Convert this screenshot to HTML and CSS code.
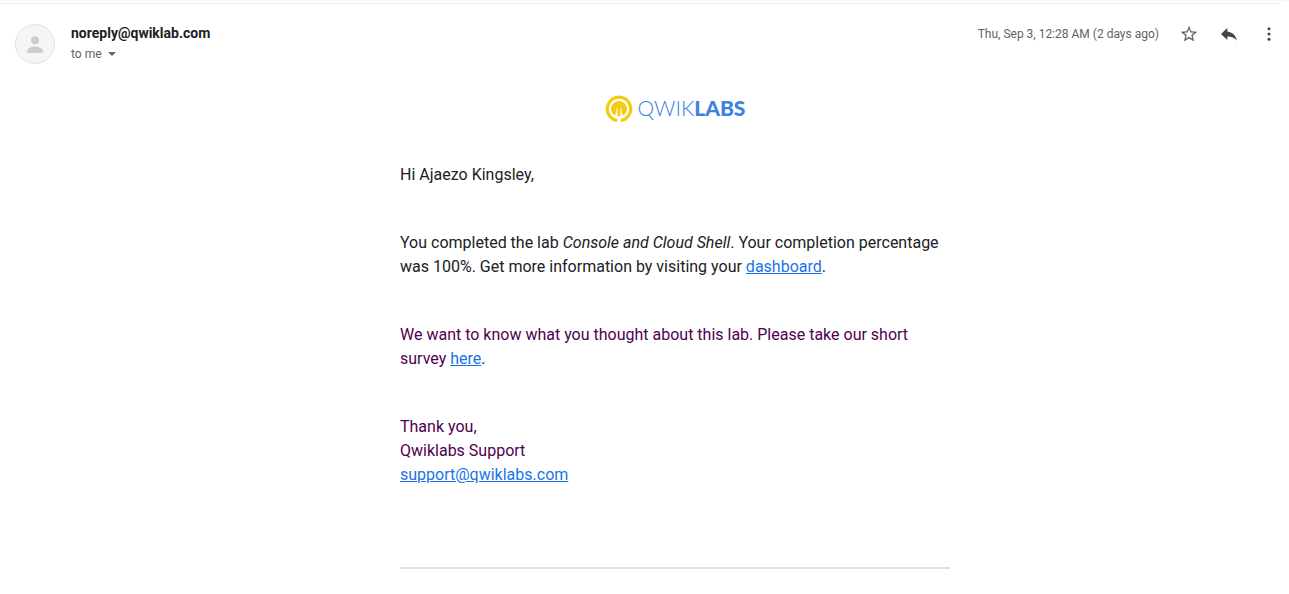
FILE: index.html
```html
<!DOCTYPE html>
<html lang="en">
<head>
<meta charset="utf-8">
<meta name="viewport" content="width=device-width, initial-scale=1">
<title>Qwiklabs message</title>
<link rel="stylesheet" href="styles.css">
</head>
<body>
<div class="top-edge"></div>
<div class="divider-strip"></div>
<article class="message">
  <header class="message-header">
    <svg class="avatar" viewBox="0 0 40 40" role="img" aria-label="Sender avatar">
      <circle cx="20" cy="20" r="19.5" fill="#f5f5f5" stroke="#e0e0e0"/>
      <circle cx="20" cy="16.300" r="4" fill="#ccc"/>
      <path d="M12.200 29v-2.300c0-2.700 4.500-4.300 7.800-4.300s7.800 1.600 7.800 4.300V29z" fill="#ccc"/>
    </svg>
    <div class="sender">
      <h3 class="sender-name">noreply@qwiklab.com</h3>
      <button class="recipient" type="button">to me
        <svg class="caret" viewBox="0 0 8 4" aria-hidden="true"><path d="M0 0h8L4 4z"/></svg>
      </button>
    </div>
    <time class="date">Thu, Sep 3, 12:28 AM (2 days ago)</time>
    <div class="actions">
      <button class="icon-button" type="button" aria-label="Star">
        <svg viewBox="0 0 20 20" fill="#666"><path d="M18.300 7.700l-6-.5L10 1.700 7.700 7.200l-6 .5 4.550 3.950L4.900 17.500l5.100-3.100 5.100 3.100-1.350-5.850zM10 12.800l-3.100 1.900.8-3.600-2.750-2.400 3.650-.3L10 5.050l1.400 3.350 3.650.3-2.750 2.400.8 3.600z"/></svg>
      </button>
      <button class="icon-button" type="button" aria-label="Reply">
        <svg viewBox="0 0 20 20" fill="#444"><path d="M8.300 7.400V4L2 10l6.300 6v-3.500c4.200 0 7.300 1.300 9.700 4.200-1-4.500-3.700-8.500-9.700-9.300z"/></svg>
      </button>
      <button class="icon-button" type="button" aria-label="More">
        <svg viewBox="0 0 20 20" fill="#444"><circle cx="10" cy="4.700" r="1.500"/><circle cx="10" cy="10" r="1.500"/><circle cx="10" cy="15.300" r="1.500"/></svg>
      </button>
    </div>
  </header>
  <div class="message-body">
    <div class="content">
      <div class="logo">
        <svg class="logo-mark" viewBox="0 0 28 28" aria-hidden="true">
          <path d="M12.300 25.500A11.700 11.700 0 1 1 15.700 25.500" fill="none" stroke="#f4cb0d" stroke-width="3.200"/>
          <path d="M9.500 20.600A8 8 0 1 1 18.500 20.600L16.600 17.700V13.500H15.500V21H12.500V13.500H11.400V17.700z" fill="#f4cb0d"/>
        </svg>
        <span class="logo-text">QWIK<b>LABS</b></span>
      </div>
      <p>Hi Ajaezo Kingsley,</p>
      <p>You completed the lab <em>Console and Cloud Shell</em>. Your completion percentage was 100%. Get more information by visiting your <a href="#">dashboard</a>.</p>
      <p class="quoted">We want to know what you thought about this lab. Please take our short survey <a href="#">here</a>.</p>
      <p class="quoted">Thank you,<br>Qwiklabs Support<br><a href="#">support@qwiklabs.com</a></p>
      <hr>
    </div>
  </div>
</article>
</body>
</html>
```
FILE: styles.css
```css
* {
  box-sizing: border-box;
}

body {
  margin: 0;
  background: #fff;
  color: #202124;
  font-family: Roboto, "Liberation Sans", sans-serif;
}

.top-edge {
  height: 1px;
  background: #f7f7f7;
}

.divider-strip {
  height: 3px;
  margin-right: 10px;
  border-bottom: 1px solid #ebebeb;
}

.message {
  padding: 20px 10px 0 15px;
}

.message-header {
  display: flex;
  align-items: flex-start;
}

.avatar {
  width: 40px;
  height: 40px;
  margin-right: 16px;
}

.sender {
  flex: 1;
}

.sender-name {
  margin: 0;
  font-size: 14px;
  line-height: 18px;
  font-weight: 700;
}

button {
  padding: 0;
  border: 0;
  background: none;
  font: inherit;
}

.recipient {
  display: flex;
  align-items: center;
  gap: 6px;
  color: #5f6368;
  font-size: 12px;
  line-height: 24px;
}

.caret {
  width: 8px;
  height: 4px;
  fill: #666;
}

.date {
  margin-right: 20px;
  color: #5f6368;
  font-size: 12px;
  line-height: 20px;
}

.actions {
  display: flex;
  gap: 20px;
}

.icon-button,
.icon-button svg {
  display: block;
  width: 20px;
  height: 20px;
}

.message-body {
  padding: 30px 0 24px 56px;
}

.content {
  max-width: 550px;
  margin: 0 auto;
  font-size: 16px;
  line-height: 24px;
}

.logo {
  display: flex;
  justify-content: center;
  align-items: center;
  gap: 5px;
  height: 26px;
  margin-bottom: 41px;
}

.logo-mark {
  width: 28px;
  height: 28px;
}

.logo-text {
  padding-bottom: 2px;
  color: #3b82e4;
  font-family: Lato, sans-serif;
  font-size: 21px;
  line-height: 24px;
  font-weight: 300;
}

.logo-text b {
  font-weight: 900;
}

.content p {
  margin: 0 0 44px;
}

.content .quoted {
  color: #500050;
}

.content a {
  color: #1a73e8;
}

.content hr {
  height: 2px;
  margin: 80px 0 0;
  border: 0;
  background: #e0e0e6;
}
```
